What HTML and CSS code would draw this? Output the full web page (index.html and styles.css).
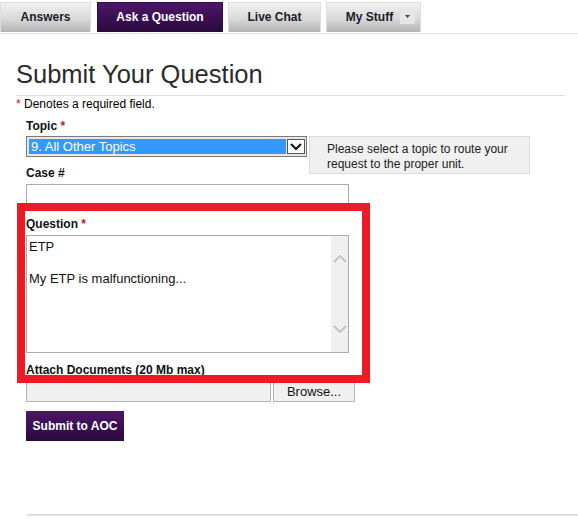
FILE: index.html
```html
<!DOCTYPE html>
<html lang="en">
<head>
  <meta charset="UTF-8">
  <title>Submit Your Question</title>
  <link rel="stylesheet" href="styles.css">
</head>
<body>
  <!-- Tabs -->
  <nav class="tabs">
    <a class="tab tab-answers">Answers</a>
    <a class="tab tab-ask active">Ask a Question</a>
    <a class="tab tab-chat">Live Chat</a>
    <a class="tab tab-stuff">My Stuff <span class="tab-drop"><svg width="6" height="4" viewBox="0 0 6 4"><path d="M0 0h5L2.5 3z" fill="#444"/></svg></span></a>
  </nav>

  <div class="page">
    <h1 class="page-title">Submit Your Question</h1>
    <p class="note"><span class="req">*</span> Denotes a required field.</p>

    <form class="ask-form">
      <label class="field-label label-topic">Topic <span class="req">*</span></label>
      <div class="topic-row">
        <div class="select">
          <span class="select-value">9. All Other Topics</span>
          <span class="select-arrow"><svg width="12" height="8" viewBox="0 0 12 8"><path d="M1 1l5 5 5-5" fill="none" stroke="#111" stroke-width="2"/></svg></span>
        </div>
        <div class="help-box">Please select a topic to route your<br>request to the proper unit.</div>
      </div>

      <label class="field-label label-case">Case #</label>
      <div class="text-input"></div>

      <div class="highlight">
        <label class="field-label label-question">Question <span class="req">*</span></label>
        <div class="textarea">
          <div class="textarea-text">ETP<br><br>My ETP is malfunctioning...</div>
          <div class="scrollbar">
            <svg width="14" height="8" viewBox="0 0 14 8"><path d="M1 7l6-6 6 6" fill="none" stroke="#c4c4c4" stroke-width="2"/></svg>
            <svg width="14" height="8" viewBox="0 0 14 8"><path d="M1 1l6 6 6-6" fill="none" stroke="#c4c4c4" stroke-width="2"/></svg>
          </div>
        </div>
        <label class="field-label label-attach">Attach Documents (20 Mb max)</label>
      </div>

      <div class="file-row">
        <div class="file-name"></div>
        <div class="file-browse">Browse...</div>
      </div>

      <button type="button" class="submit-button">Submit to AOC</button>
    </form>

    <div class="footer-line"></div>
  </div>
</body>
</html>
```
FILE: styles.css
```css
body {
  margin: 0;
  padding: 0;
  font-family: "Liberation Sans", Arial, sans-serif;
  font-size: 12px;
  color: #000;
  background-color: #fff;
}

/* Tabs */
.tabs {
  display: flex;
  padding-top: 2px;
  padding-bottom: 1px;
  border-bottom: 1px solid #dcdcdc;
}

.tab {
  display: flex;
  align-items: center;
  justify-content: center;
  box-sizing: border-box;
  height: 30px;
  padding-bottom: 2px;
  margin-right: 5px;
  border: 1px solid #dedede;
  border-bottom: none;
  background: linear-gradient(#f2f2f2, #d8d8d8 55%, #b4b4b4);
  color: #1c1c2c;
  font-weight: bold;
  font-size: 12px;
}

.tab-answers {
  width: 91px;
  margin-right: 6px;
}

.tab-ask {
  width: 126px;
}

.tab-chat {
  width: 93px;
}

.tab-stuff {
  width: 95px;
  padding-left: 14px;
}

.tab.active {
  background: linear-gradient(#4c1669, #3a0f52 55%, #2a0a3a);
  border-color: #3a0f52;
  color: #fff;
}

.tab-drop {
  display: flex;
  align-items: center;
  justify-content: center;
  width: 15px;
  height: 15px;
  margin-left: 7px;
  background-color: #e6e6e6;
}

/* Page */
.page {
  padding-left: 16px;
}

.page-title {
  width: 549px;
  margin: 26px 0 0;
  padding-bottom: 7px;
  border-bottom: 1px solid #dcdcdc;
  font-size: 25.5px;
  font-weight: normal;
  line-height: 28px;
  color: #2b2b2b;
}

.note {
  margin: 0;
  padding-top: 1px;
  line-height: 14px;
}

.req {
  color: #c8102e;
}

.ask-form {
  padding-left: 10px;
}

.field-label {
  display: block;
  font-weight: bold;
  line-height: 14px;
  color: #111;
}

.label-topic {
  margin-top: 8px;
}

.topic-row {
  display: flex;
  align-items: flex-start;
  height: 21px;
  margin-top: 3px;
}

.select {
  display: flex;
  box-sizing: border-box;
  width: 281px;
  height: 21px;
  padding: 2px 1px 2px 2px;
  border: 1px solid #7a7a7a;
  background-color: #e8e8e8;
}

.select-value {
  flex: 1;
  padding-left: 2px;
  background-color: #3399ff;
  color: #fff;
  font-size: 13px;
  line-height: 16px;
}

.select-arrow {
  display: flex;
  align-items: center;
  justify-content: center;
  box-sizing: border-box;
  width: 18px;
  margin-left: 1px;
  border: 1px solid #555;
  background-color: #fff;
}

.help-box {
  box-sizing: border-box;
  width: 221px;
  height: 38px;
  margin-left: 2px;
  padding: 5px 0 0 17px;
  border: 1px solid #dcdcdc;
  background-color: #f0f0f0;
  line-height: 15px;
  color: #222;
}

.label-case {
  margin-top: 9px;
}

.text-input {
  box-sizing: border-box;
  width: 323px;
  height: 22px;
  margin-top: 4px;
  border: 1px solid #ababab;
  background-color: #fff;
}

/* Red annotation box */
.highlight {
  position: relative;
  margin-top: 11px;
}

.highlight::after {
  content: "";
  position: absolute;
  top: -14px;
  left: -9px;
  box-sizing: border-box;
  width: 353px;
  height: 180px;
  border: 8px solid #ed1c24;
  pointer-events: none;
}

.textarea {
  display: flex;
  box-sizing: border-box;
  width: 323px;
  height: 118px;
  margin-top: 4px;
  border: 1px solid #ababab;
  background-color: #fff;
}

.textarea-text {
  flex: 1;
  padding: 3px 0 0 2px;
  font-size: 13px;
  line-height: 16px;
  color: #111;
}

.scrollbar {
  display: flex;
  flex-direction: column;
  justify-content: space-between;
  align-items: center;
  width: 17px;
  padding: 19px 0 19px;
  background-color: #f0f0f0;
}

.label-attach {
  margin-top: 10px;
}

.file-row {
  display: flex;
  margin-top: 5px;
}

.file-name {
  box-sizing: border-box;
  width: 245px;
  height: 20px;
  border: 1px solid #b4b4b4;
  background-color: #f0f0f0;
}

.file-browse {
  box-sizing: border-box;
  width: 82px;
  height: 20px;
  margin-left: 2px;
  border: 1px solid #b4b4b4;
  background-color: #f0f0f0;
  text-align: center;
  font-size: 13px;
  line-height: 18px;
  color: #111;
}

.submit-button {
  display: block;
  width: 98px;
  height: 30px;
  margin-top: 9px;
  padding: 0;
  border: none;
  background: linear-gradient(#4c1669, #3a0f52 55%, #2a0a3a);
  color: #fff;
  font-family: "Liberation Sans", Arial, sans-serif;
  font-size: 12px;
  font-weight: bold;
}

.footer-line {
  margin-top: 73px;
  margin-left: 11px;
  height: 1px;
  border-top: 1px solid #d4d4d4;
  background-color: #e6e6e6;
}
```
